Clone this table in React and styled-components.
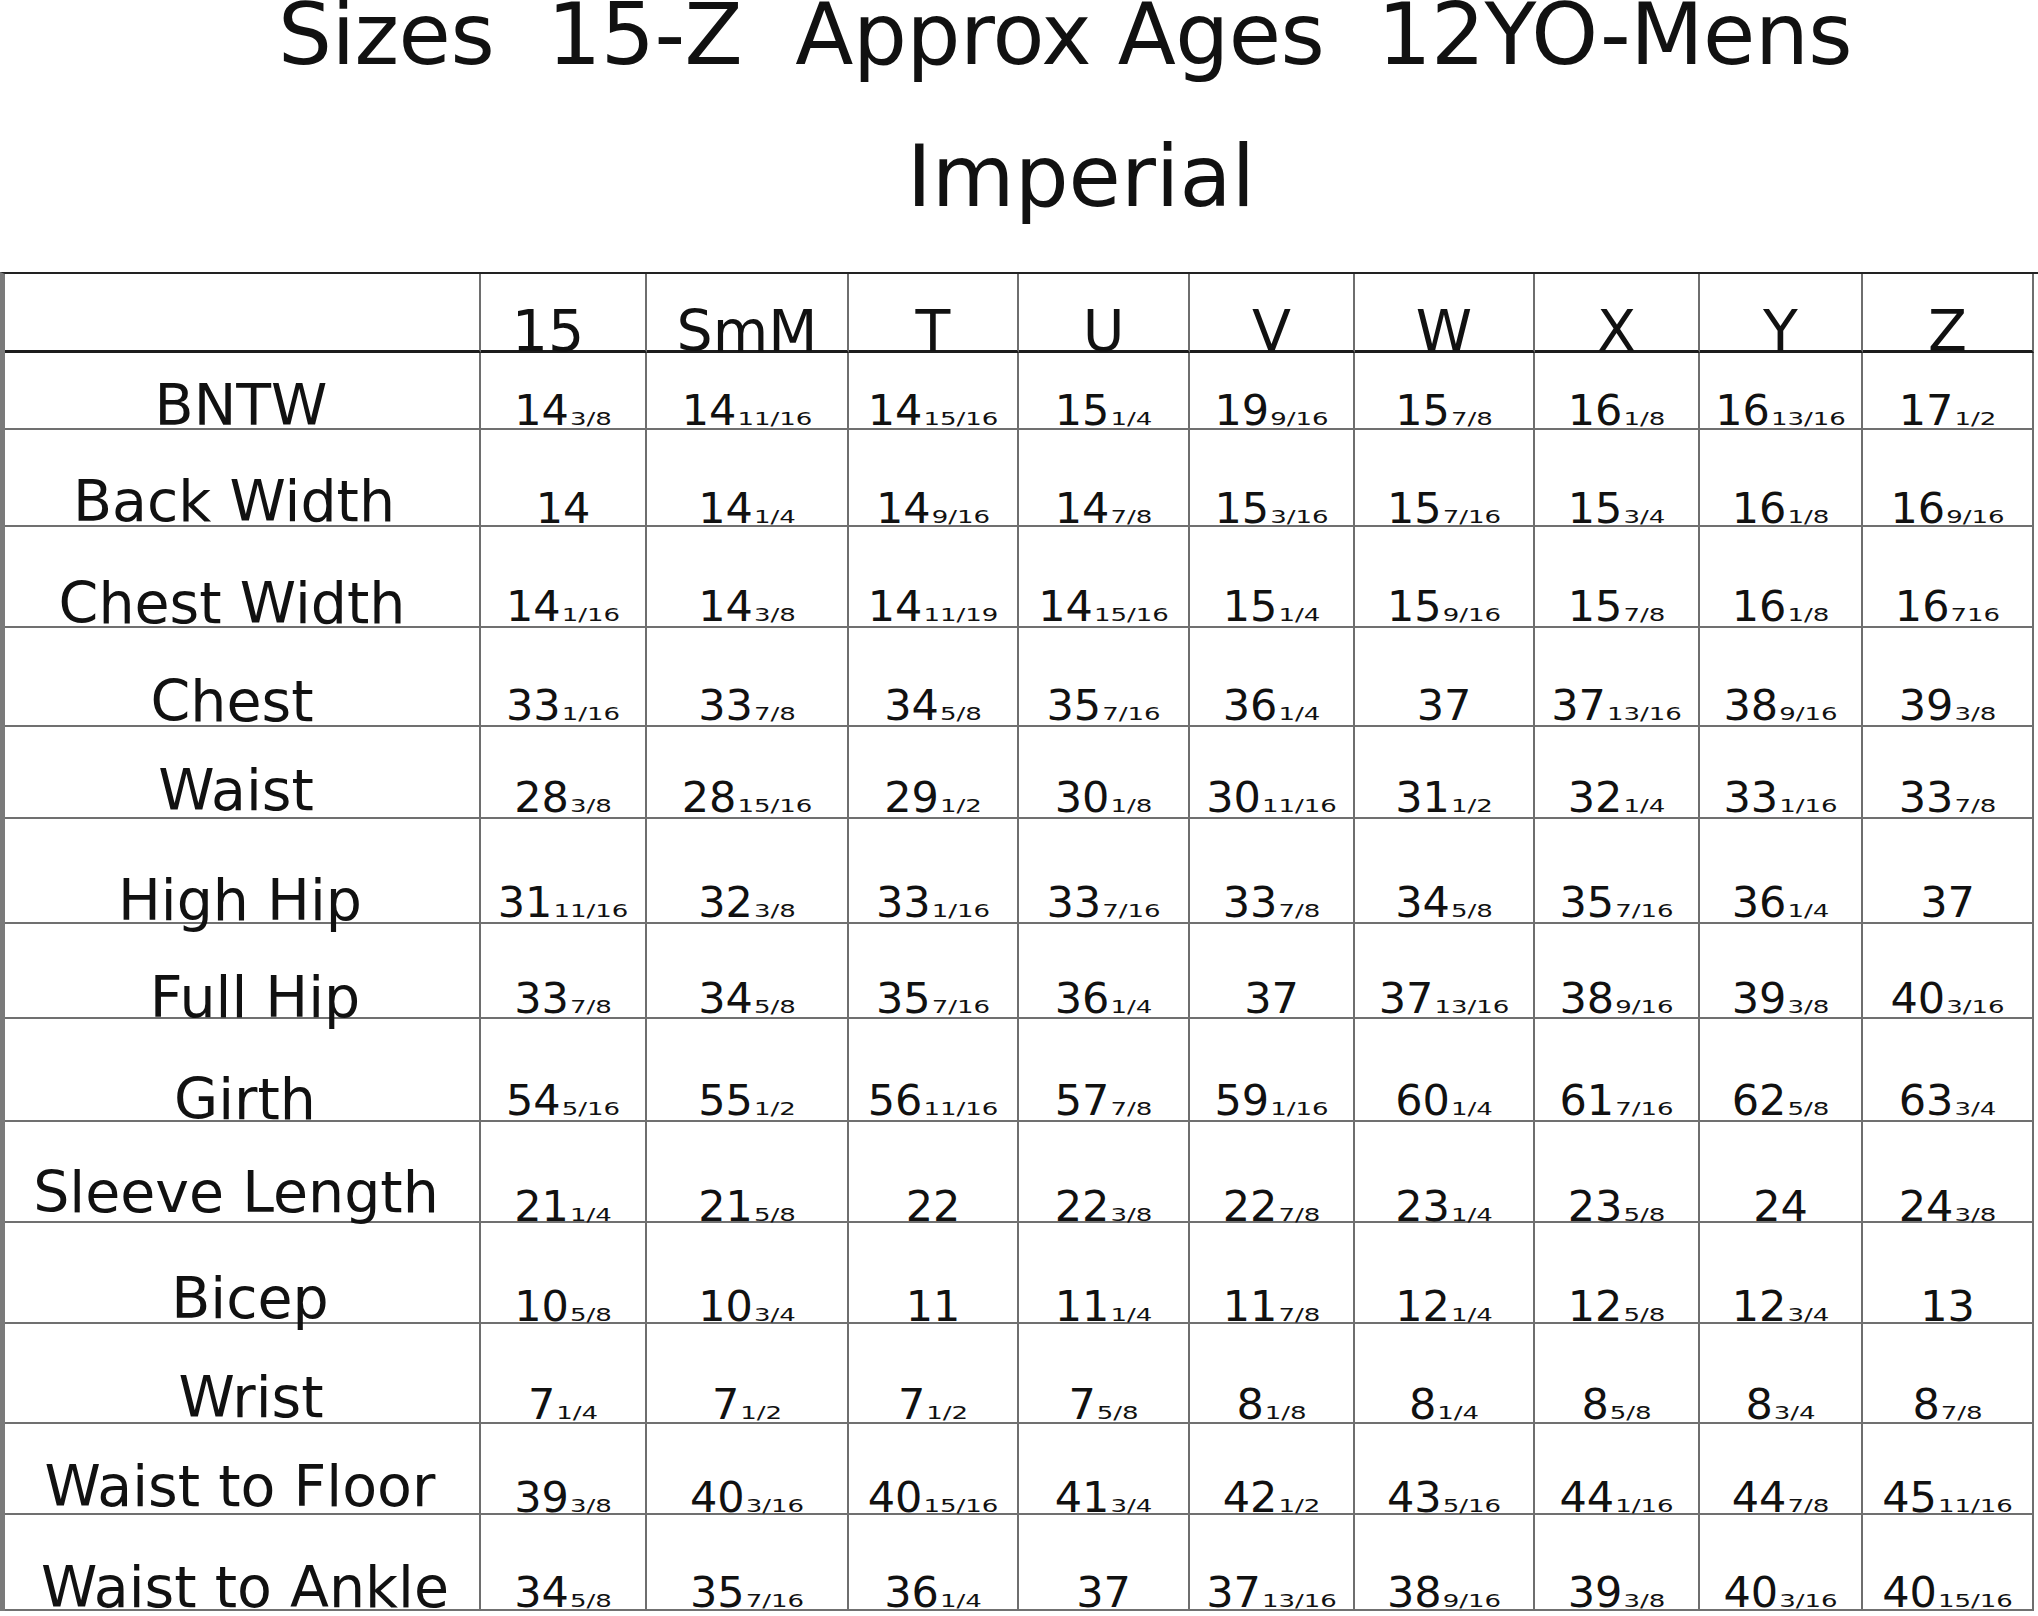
import React from "react";
import styled, { createGlobalStyle } from "styled-components";

const Global = createGlobalStyle`
  html, body { margin: 0; padding: 0; background: #ffffff; }
  body { font-family: "DejaVu Sans", Verdana, sans-serif; color: #111; overflow: hidden; }
`;

const COLS = [476, 166, 202, 170, 171, 165, 180, 165, 163, 171];
const TEMPLATE = COLS.map((c) => `${c}px`).join(" ");

const HEAD = ["15", "SmM", "T", "U", "V", "W", "X", "Y", "Z"];

const ROWS = [
  { label: "BNTW", h: 77, dx: -1, dy: 4, vdy: 4, vals: ["14 3/8", "14 11/16", "14 15/16", "15 1/4", "19 9/16", "15 7/8", "16 1/8", "16 13/16", "17 1/2"] },
  { label: "Back Width", h: 97, dx: -8, dy: 5, vdy: 3, vals: ["14", "14 1/4", "14 9/16", "14 7/8", "15 3/16", "15 7/16", "15 3/4", "16 1/8", "16 9/16"] },
  { label: "Chest Width", h: 101, dx: -10, dy: 4, vdy: 6, vals: ["14 1/16", "14 3/8", "14 11/19", "14 15/16", "15 1/4", "15 9/16", "15 7/8", "16 1/8", "16 716"] },
  { label: "Chest", h: 99, dx: -10, dy: 5, vdy: 6, vals: ["33 1/16", "33 7/8", "34 5/8", "35 7/16", "36 1/4", "37", "37 13/16", "38 9/16", "39 3/8"] },
  { label: "Waist", h: 92, dx: -6, dy: 8, vdy: 6, vals: ["28 3/8", "28 15/16", "29 1/2", "30 1/8", "30 11/16", "31 1/2", "32 1/4", "33 1/16", "33 7/8"] },
  { label: "High Hip", h: 105, dx: -2, dy: 3, vdy: 6, vals: ["31 11/16", "32 3/8", "33 1/16", "33 7/16", "33 7/8", "34 5/8", "35 7/16", "36 1/4", "37"] },
  { label: "Full Hip", h: 95, dx: 13, dy: 1, vdy: 5, vals: ["33 7/8", "34 5/8", "35 7/16", "36 1/4", "37", "37 13/16", "38 9/16", "39 3/8", "40 3/16"] },
  { label: "Girth", h: 103, dx: 3, dy: 2, vdy: 6, vals: ["54 5/16", "55 1/2", "56 11/16", "57 7/8", "59 1/16", "60 1/4", "61 7/16", "62 5/8", "63 3/4"] },
  { label: "Sleeve Length", h: 101, dx: -6, dy: 10, vdy: 1, vals: ["21 1/4", "21 5/8", "22", "22 3/8", "22 7/8", "23 1/4", "23 5/8", "24", "24 3/8"] },
  { label: "Bicep", h: 101, dx: 8, dy: 5, vdy: 2, vals: ["10 5/8", "10 3/4", "11", "11 1/4", "11 7/8", "12 1/4", "12 5/8", "12 3/4", "13"] },
  { label: "Wrist", h: 100, dx: 9, dy: 6, vdy: 4, vals: ["7 1/4", "7 1/2", "7 1/2", "7 5/8", "8 1/8", "8 1/4", "8 5/8", "8 3/4", "8 7/8"] },
  { label: "Waist to Floor", h: 91, dx: -2, dy: 8, vdy: 2, vals: ["39 3/8", "40 3/16", "40 15/16", "41 3/4", "42 1/2", "43 5/16", "44 1/16", "44 7/8", "45 11/16"] },
  { label: "Waist to Ankle", h: 96, dx: 3, dy: 3, vdy: 3, vals: ["34 5/8", "35 7/16", "36 1/4", "37", "37 13/16", "38 9/16", "39 3/8", "40 3/16", "40 15/16"] },
];

const Page = styled.div`
  width: 2038px;
  height: 1616px;
  display: flex;
  flex-direction: column;
  background: #fff;
`;

const TitleLine = styled.div`
  font-family: "DejaVu Sans", Verdana, sans-serif;
  font-size: 85px;
  color: #111;
  white-space: pre;
  text-align: center;
  line-height: ${(p) => p.$lh}px;
  margin-top: ${(p) => p.$mt}px;
  padding-left: ${(p) => p.$pl}px;
  letter-spacing: ${(p) => p.$ls}px;
`;

const Table = styled.div`
  margin-top: 45px;
  width: 2034px;
  border-top: 2px solid #222;
  border-left: 5px solid #7a7a7a;
  display: flex;
  flex-direction: column;
`;

const Row = styled.div`
  display: grid;
  grid-template-columns: ${TEMPLATE};
  height: ${(p) => p.$h}px;
`;

const Cell = styled.div`
  box-sizing: border-box;
  display: flex;
  align-items: flex-end;
  justify-content: center;
  border-right: 2px solid #6e6e6e;
  border-bottom: ${(p) => (p.$head ? "3px solid #1c1c1c" : "2px solid #707070")};
  overflow: visible;
  min-width: 0;
`;

const HeadText = styled.span`
  font-size: 57px;
  line-height: 1;
  margin-bottom: -10px;
  margin-left: ${(p) => p.$dx || 0}px;
  position: relative;
  z-index: 1;
`;

const Label = styled.span`
  font-size: 57px;
  line-height: 1;
  white-space: nowrap;
  margin-bottom: ${(p) => p.$dy - 9.8}px;
  margin-left: ${(p) => p.$dx * 2}px;
`;

const Value = styled.span`
  font-size: 43px;
  line-height: 1;
  white-space: nowrap;
  margin-bottom: ${(p) => p.$dy - 7.6}px;
`;

const Frac = styled.span`
  display: inline-block;
  font-size: 26px;
  line-height: 1;
  margin-left: 1px;
  transform: scaleY(0.7);
  transform-origin: 0 22px;
`;

function Measure({ text, dy }) {
  const [whole, frac] = text.split(" ");
  return (
    <Value $dy={dy}>
      {whole}
      {frac ? <Frac>{frac}</Frac> : null}
    </Value>
  );
}

export default function App() {
  return (
    <>
      <Global />
      <Page>
        <TitleLine $lh={70} $mt={0} $pl={92} $ls={-0.5}>
          {"Sizes  15-Z  Approx Ages  12YO-Mens"}
        </TitleLine>
        <TitleLine $lh={100} $mt={57} $pl={124} $ls={0}>
          Imperial
        </TitleLine>
        <Table>
          <Row $h={79}>
            <Cell $head />
            {HEAD.map((h, i) => (
              <Cell $head key={h}>
                <HeadText $dx={i === 0 ? -30 : 0}>{h}</HeadText>
              </Cell>
            ))}
          </Row>
          {ROWS.map((r) => (
            <Row $h={r.h} key={r.label}>
              <Cell>
                <Label $dx={r.dx} $dy={r.dy}>
                  {r.label}
                </Label>
              </Cell>
              {r.vals.map((v, i) => (
                <Cell key={i}>
                  <Measure text={v} dy={r.vdy} />
                </Cell>
              ))}
            </Row>
          ))}
        </Table>
      </Page>
    </>
  );
}
